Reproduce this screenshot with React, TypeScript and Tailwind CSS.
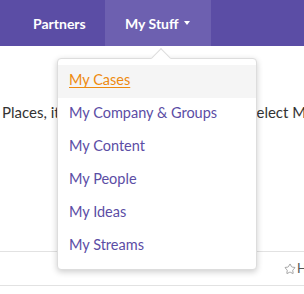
import { Star } from "lucide-react";

const menuItems = [
  { name: "My Cases", active: true },
  { name: "My Company & Groups" },
  { name: "My Content" },
  { name: "My People" },
  { name: "My Ideas" },
  { name: "My Streams" },
];

export default function App() {
  return (
    <div className="relative w-[304px] h-[294px] overflow-hidden bg-white font-['Lato',sans-serif]">
      {/* top navigation */}
      <header className="h-[46px] bg-[#5b4da5] flex">
        <button className="w-[105px] h-full pl-[33px] text-left text-white text-[14px] font-bold">Partners</button>
        <button className="w-[106px] h-full bg-[#6d60b0] text-white text-[14px] font-bold flex items-center pl-5">
          My Stuff
          <span className="ml-[5px] w-0 h-0 border-l-[3px] border-r-[3px] border-t-[4px] border-l-transparent border-r-transparent border-t-white" />
        </button>
      </header>

      {/* page content behind the menu */}
      <div className="mt-[55px] flex text-[15px] text-[#333] whitespace-nowrap h-[22px] items-center">
        <span className="pl-[2px]">Places, it is easy to find</span>
        <span className="absolute left-[250px]">select My Stuff</span>
      </div>
      <div className="mt-[128px] border-t border-b border-[#e2e2e2] h-[35px] flex items-center pl-[284px] whitespace-nowrap">
        <div className="flex items-center gap-[1px] text-[13px] text-[#555]">
          <Star size={12} strokeWidth={1.3} className="text-[#777]" />
          <span>Helpful</span>
        </div>
      </div>

      {/* dropdown */}
      <div className="absolute left-[57px] top-[58px] w-[200px] bg-white rounded-[4px] border border-[#ddd] shadow-[0_2px_6px_rgba(0,0,0,0.2)] py-[6px]">
        <div className="absolute left-[96px] -top-[8px] w-[14px] h-[14px] rotate-45 bg-white border-l border-t border-[#ddd]" />
        <ul className="relative">
          {menuItems.map((item) => (
            <li
              key={item.name}
              className={`h-[33px] flex items-center pb-[3px] px-[11px] text-[14.5px] ${
                item.active ? "bg-[#f5f5f5] text-[#ee8a0e] underline underline-offset-2" : "text-[#5b4da5]"
              }`}
            >
              {item.name}
            </li>
          ))}
        </ul>
      </div>
    </div>
  );
}
